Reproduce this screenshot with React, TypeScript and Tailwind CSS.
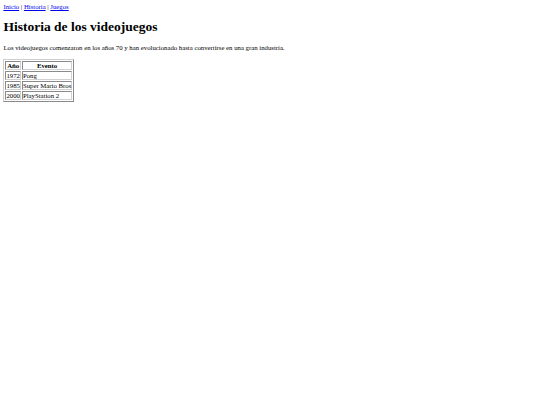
export default function App() {
  const rows = [
    ['1972', 'Pong'],
    ['1985', 'Super Mario Bros'],
    ['2000', 'PlayStation 2'],
  ]

  const cell =
    'border border-b-[#d0d0d0] border-l-[#8a8a8a] border-r-[#d0d0d0] border-t-[#8a8a8a] p-0 leading-[7px]'

  return (
    <div className="min-h-[405px] bg-white p-[3.4px] text-[6.75px] leading-[normal] text-black [font-family:'Liberation_Serif',serif]">
      <nav>
        <a href="#" className="text-[#0000ee] underline">Inicio</a>
        {' | '}
        <a href="#" className="text-[#0000ee] underline">Historia</a>
        {' | '}
        <a href="#" className="text-[#0000ee] underline">Juegos</a>
      </nav>

      <h1 className="my-[9px] text-[13.5px] font-bold leading-[normal]">Historia de los videojuegos</h1>

      <p className="mb-[7.5px]">
        Los videojuegos comenzaron en los años 70 y han evolucionado hasta convertirse en una gran industria.
      </p>

      <table className="border-separate border-spacing-[1px] border border-b-[#8a8a8a] border-l-[#d0d0d0] border-r-[#8a8a8a] border-t-[#d0d0d0]">
        <thead>
          <tr>
            <th className={`${cell} text-center font-bold`}>Año</th>
            <th className={`${cell} text-center font-bold`}>Evento</th>
          </tr>
        </thead>
        <tbody>
          {rows.map(([year, event]) => (
            <tr key={year}>
              <td className={cell}>{year}</td>
              <td className={cell}>{event}</td>
            </tr>
          ))}
        </tbody>
      </table>
    </div>
  )
}
